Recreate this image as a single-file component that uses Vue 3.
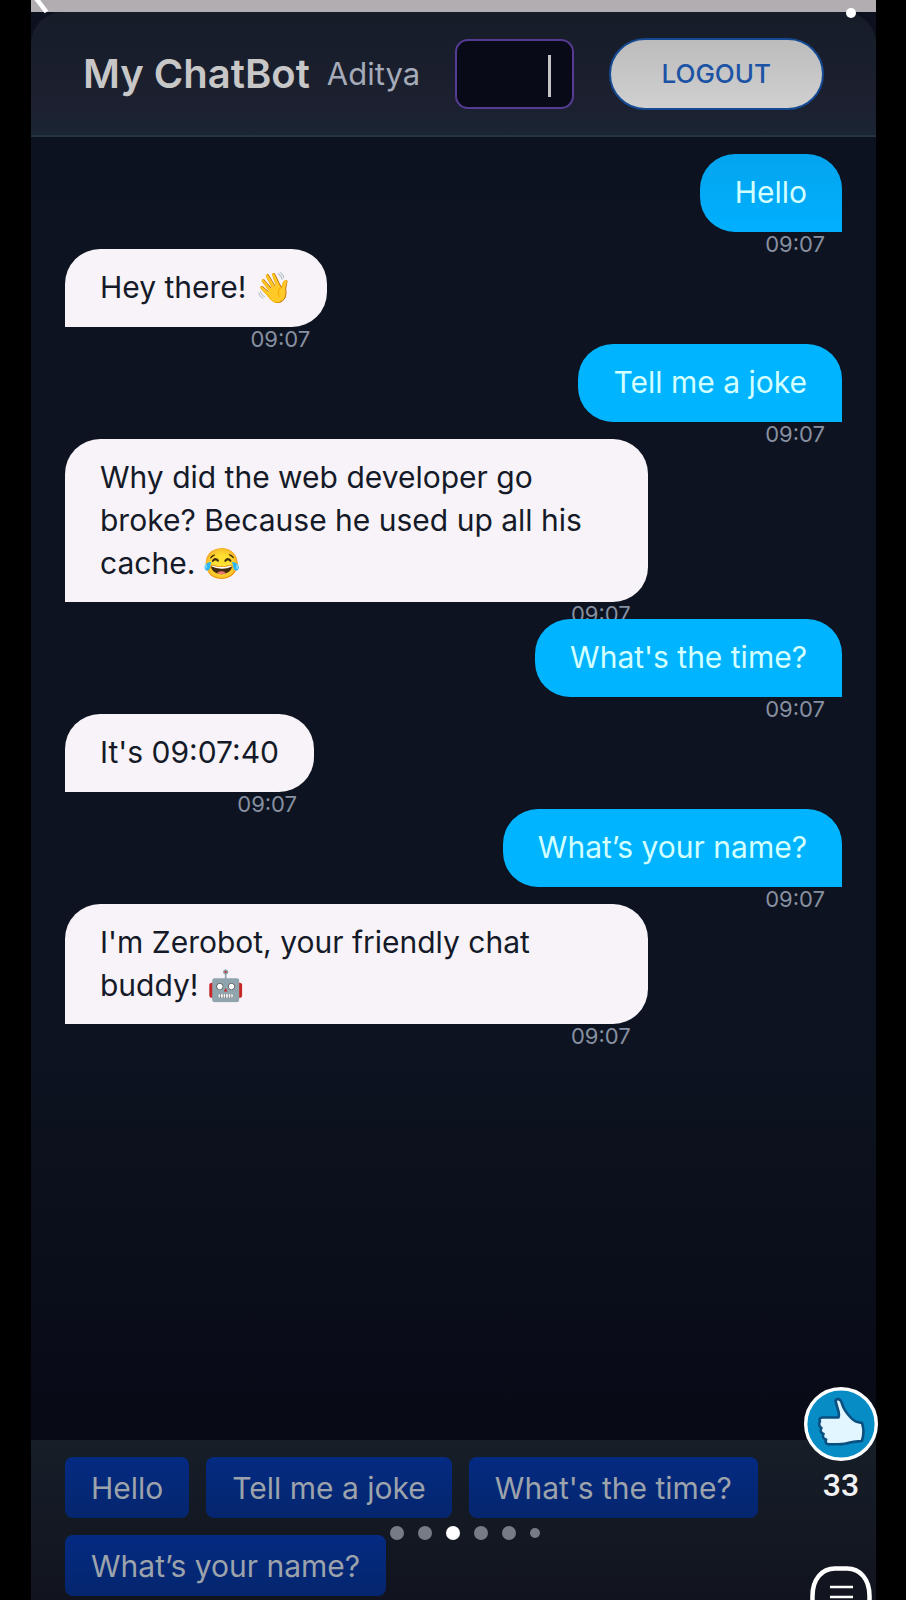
<script setup>
import { ref } from 'vue'

const messages = [
  { from: 'user', text: 'Hello', time: '09:07' },
  { from: 'bot', text: 'Hey there! 👋', time: '09:07' },
  { from: 'user', text: 'Tell me a joke', time: '09:07' },
  { from: 'bot', text: 'Why did the web developer go broke? Because he used up all his cache. 😂', time: '09:07' },
  { from: 'user', text: "What's the time?", time: '09:07' },
  { from: 'bot', text: "It's 09:07:40", time: '09:07' },
  { from: 'user', text: 'What’s your name?', time: '09:07' },
  { from: 'bot', text: "I'm Zerobot, your friendly chat buddy! 🤖", time: '09:07' },
]
const suggestions = ['Hello', 'Tell me a joke', "What's the time?", 'What’s your name?']
const pages = 6
const current = 2
const userName = ref('')
</script>

<template>
  <div class="viewer">
    <div class="phone">
      <div class="strip"></div>
      <header class="header">
        <h1 class="title">My ChatBot</h1>
        <label class="user" for="user-name">Aditya</label>
        <div class="field">
          <input id="user-name" v-model="userName" type="text" />
          <span class="caret"></span>
        </div>
        <button class="logout" type="button">LOGOUT</button>
      </header>

      <main class="chat">
        <div v-for="(m, i) in messages" :key="i" class="bubble" :class="m.from">
          {{ m.text }}
          <time class="time">{{ m.time }}</time>
        </div>
      </main>

      <footer class="suggestions">
        <button v-for="s in suggestions" :key="s" class="chip" type="button">{{ s }}</button>
      </footer>
    </div>

    <svg class="back" width="20" height="15" viewBox="0 0 20 15" aria-hidden="true">
      <path d="M4 -3 L15.500 12" stroke="#fff" stroke-width="4.500" fill="none" />
    </svg>
    <span class="more"></span>

    <div class="dots">
      <span v-for="n in pages" :key="n" class="dot" :class="{ active: n - 1 === current, small: n === pages }"></span>
    </div>

    <div class="actions">
      <button class="like" type="button" aria-label="Like">
        <svg width="74" height="74" viewBox="0 0 74 74">
          <circle cx="37" cy="37" r="35.300" fill="#078cc6" stroke="#fff" stroke-width="3.400" />
          <path
            d="M31.500 13.500 C32.500 11.500 36 11.500 37.200 14.500 C38.500 19 40.500 23.500 44 27.500 C47 31 49 34 53.500 35 L58 36 C60 42 60 48 57.800 54 C53 54.500 50 54.500 46 55.500 C42 57 38 57.200 34 57.200 L24.500 57.200 C21.500 57 21 54.500 22.200 52.500 C19 52 18 49 19.600 47 C16.500 46 15.800 43 17.500 41 C15 39.500 14.500 36.500 16 34.500 C14.800 32 16 30.500 18.500 30.500 L34.500 30.500 C36.500 26.500 32.500 20 31.500 13.500 Z"
            fill="#e2f6ff" stroke="#0b4f80" stroke-width="2.600" stroke-linejoin="round" />
        </svg>
      </button>
      <span class="count">33</span>
    </div>
    <button class="comment" type="button" aria-label="Comments">
      <svg width="62" height="34" viewBox="0 0 62 34">
        <path d="M2.500 40 V30 C2.500 13 12 2.500 25 2.500 H37 C50 2.500 59.500 13 59.500 30 V40" fill="#12151f" stroke="#fff" stroke-width="4.500" />
        <path d="M20 21 H43 M20 31 H43" stroke="#fff" stroke-width="2.500" />
      </svg>
    </button>
  </div>
</template>

<style>
body {
  margin: 0;
  background: #000;
}
</style>

<style scoped>
* {
  box-sizing: border-box;
}
.viewer {
  position: relative;
  display: flex;
  height: 100vh;
  padding: 0 30px 0 31px;
  overflow: hidden;
  background: #000;
  font-family: Inter, "Liberation Sans", "Noto Color Emoji", sans-serif;
}
button,
input {
  font-family: inherit;
}
.phone {
  flex: 1;
  display: flex;
  flex-direction: column;
  min-width: 0;
  background: linear-gradient(#0c101f 0, #0d1320 240px, #0d1320 1050px, #080b16 1420px);
}
.strip {
  flex: none;
  height: 12px;
  background: #b2adb1;
}
.header {
  flex: none;
  display: flex;
  align-items: center;
  height: 125px;
  padding: 0 52px;
  border-bottom: 2px solid #263442;
  border-radius: 32px 32px 0 0;
  background: linear-gradient(#161c28, #1c2030 75%, #1a2534);
}
.title {
  margin: 0 17px 0 0;
  color: #c8c7c7;
  font-size: 40px;
  font-weight: 600;
  white-space: nowrap;
}
.user {
  color: #a5abb8;
  font-size: 31px;
}
.field {
  position: relative;
  flex: 1;
  min-width: 0;
  height: 70px;
  margin: 0 35px;
}
.field input {
  display: block;
  width: 100%;
  height: 100%;
  padding: 0 20px;
  border: 2px solid #553b91;
  border-radius: 13px;
  outline: none;
  background: #080a18;
  color: #c8c7c7;
  font-size: 30px;
}
.caret {
  position: absolute;
  top: 16px;
  right: 23px;
  width: 3px;
  height: 42px;
  background: #c4c4c4;
}
.logout {
  height: 72px;
  padding: 0 51px;
  border: 2px solid #154a92;
  border-radius: 36px;
  background: linear-gradient(#bcbcbc, #d0d0d0);
  color: #1c53a5;
  font-size: 26px;
  font-weight: 500;
}
.chat {
  flex: 1;
  display: flex;
  flex-direction: column;
  align-items: flex-start;
  gap: 17px;
  min-height: 0;
  padding: 17px 34px;
}
.bubble {
  position: relative;
  max-width: 75%;
  min-height: 78px;
  padding: 17px 35px;
  border-radius: 35px;
  font-size: 30px;
  line-height: 43px;
}
.bubble.bot {
  border-bottom-left-radius: 0;
  background: #f8f3f8;
  color: #141a28;
}
.bubble.user {
  align-self: flex-end;
  border-bottom-right-radius: 0;
  background: #00b4ff;
  color: #d2ffff;
}
.bubble.user:first-child {
  background: linear-gradient(#04a4ee, #00b0ff);
}
.time {
  position: absolute;
  top: 100%;
  right: 17px;
  color: #8790a0;
  font-size: 22px;
  line-height: 25px;
}
.suggestions {
  flex: none;
  display: flex;
  flex-wrap: wrap;
  gap: 17px;
  padding: 17px 34px 4px;
  background: linear-gradient(#161e28, #11141f);
}
.chip {
  height: 61px;
  padding: 0 26px;
  border: 0;
  border-radius: 8px;
  background: linear-gradient(#042a82, #05266e);
  color: #9ca3ab;
  font-size: 30px;
}
.back {
  position: absolute;
  top: 0;
  left: 31px;
}
.more {
  position: absolute;
  top: 8px;
  right: 50px;
  width: 10px;
  height: 10px;
  border-radius: 50%;
  background: #fff;
}
.dots {
  position: absolute;
  bottom: 60px;
  left: calc(50% - 63px);
  display: flex;
  align-items: center;
  gap: 14px;
}
.dot {
  width: 14px;
  height: 14px;
  border-radius: 50%;
  background: #777b85;
}
.dot.active {
  background: #fff;
}
.dot.small {
  width: 10px;
  height: 10px;
}
.actions {
  position: absolute;
  right: 28px;
  bottom: 95px;
  display: flex;
  flex-direction: column;
  align-items: center;
  gap: 4px;
}
.like,
.comment {
  display: block;
  padding: 0;
  border: 0;
  background: none;
}
.like svg,
.comment svg {
  display: block;
}
.count {
  color: #f2f2f4;
  font-family: Roboto, sans-serif;
  font-size: 32px;
  font-weight: 500;
  line-height: 40px;
}
.comment {
  position: absolute;
  right: 34px;
  bottom: 0;
}
</style>
